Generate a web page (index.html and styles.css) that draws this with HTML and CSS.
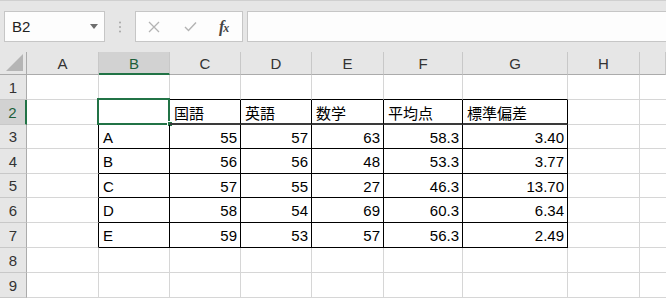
FILE: index.html
```html
<!DOCTYPE html>
<html lang="ja">
<head>
<meta charset="utf-8">
<link rel="stylesheet" href="styles.css">
</head>
<body>
<div class="app">
  <div class="toolbar">
    <div class="namebox">
      <span class="nb-text">B2</span>
      <svg class="nb-arrow" width="8" height="5" viewBox="0 0 8 5"><path d="M0 0H8L4 5Z" fill="#6e6e6e"/></svg>
    </div>
    <div class="sep-dots">
      <svg width="4" height="12" viewBox="0 0 4 12"><circle cx="2" cy="1.5" r="1" fill="#a6a6a6"/><circle cx="2" cy="6" r="1" fill="#a6a6a6"/><circle cx="2" cy="10.5" r="1" fill="#a6a6a6"/></svg>
    </div>
    <div class="fbuttons">
      <svg class="ic-x" width="12" height="12" viewBox="0 0 12 12"><path d="M1 1L11 11M11 1L1 11" stroke="#b3b3b3" stroke-width="1.3" fill="none"/></svg>
      <svg class="ic-check" width="13" height="11" viewBox="0 0 13 11"><path d="M1 6L4.5 9.5L12 1.5" stroke="#b3b3b3" stroke-width="1.4" fill="none"/></svg>
      <span class="ic-fx">f<span class="fx-x">x</span></span>
    </div>
    <div class="formula"></div>
  </div>

  <div class="sheet">
    <div class="row hdr">
      <div class="corner"><svg width="17" height="17" viewBox="0 0 17 17"><path d="M17 0V17H0Z" fill="#b5b5b5"/></svg></div>
      <div class="ch">A</div>
      <div class="ch sel">B</div>
      <div class="ch">C</div>
      <div class="ch">D</div>
      <div class="ch">E</div>
      <div class="ch">F</div>
      <div class="ch">G</div>
      <div class="ch">H</div>
      <div class="ch last"></div>
    </div>

    <div class="row r25">
      <div class="rh">1</div>
      <div class="c"></div>
      <div class="c tt"></div><div class="c tt"></div><div class="c tt"></div><div class="c tt"></div><div class="c tt"></div><div class="c tt"></div>
      <div class="c"></div><div class="c last"></div>
    </div>

    <div class="row r25">
      <div class="rh rsel">2</div>
      <div class="c tl"></div>
      <div class="c t th active"><span class="selbox"></span><span class="handle"></span></div>
      <div class="c t th">国語</div>
      <div class="c t th">英語</div>
      <div class="c t th">数学</div>
      <div class="c t th">平均点</div>
      <div class="c t th">標準偏差</div>
      <div class="c"></div><div class="c last"></div>
    </div>

    <div class="row r24">
      <div class="rh">3</div>
      <div class="c tl"></div>
      <div class="c t">A</div>
      <div class="c t n">55</div><div class="c t n">57</div><div class="c t n">63</div><div class="c t n">58.3</div><div class="c t n">3.40</div>
      <div class="c"></div><div class="c last"></div>
    </div>

    <div class="row r25">
      <div class="rh">4</div>
      <div class="c tl"></div>
      <div class="c t">B</div>
      <div class="c t n">56</div><div class="c t n">56</div><div class="c t n">48</div><div class="c t n">53.3</div><div class="c t n">3.77</div>
      <div class="c"></div><div class="c last"></div>
    </div>

    <div class="row r24">
      <div class="rh">5</div>
      <div class="c tl"></div>
      <div class="c t">C</div>
      <div class="c t n">57</div><div class="c t n">55</div><div class="c t n">27</div><div class="c t n">46.3</div><div class="c t n">13.70</div>
      <div class="c"></div><div class="c last"></div>
    </div>

    <div class="row r25">
      <div class="rh">6</div>
      <div class="c tl"></div>
      <div class="c t">D</div>
      <div class="c t n">58</div><div class="c t n">54</div><div class="c t n">69</div><div class="c t n">60.3</div><div class="c t n">6.34</div>
      <div class="c"></div><div class="c last"></div>
    </div>

    <div class="row r25">
      <div class="rh">7</div>
      <div class="c tl"></div>
      <div class="c t">E</div>
      <div class="c t n">59</div><div class="c t n">53</div><div class="c t n">57</div><div class="c t n">56.3</div><div class="c t n">2.49</div>
      <div class="c"></div><div class="c last"></div>
    </div>

    <div class="row r25">
      <div class="rh">8</div>
      <div class="c"></div><div class="c"></div><div class="c"></div><div class="c"></div><div class="c"></div><div class="c"></div><div class="c"></div><div class="c"></div><div class="c last"></div>
    </div>

    <div class="row r25">
      <div class="rh">9</div>
      <div class="c"></div><div class="c"></div><div class="c"></div><div class="c"></div><div class="c"></div><div class="c"></div><div class="c"></div><div class="c"></div><div class="c last"></div>
    </div>
  </div>
</div>
</body>
</html>
```

FILE: styles.css
```css
* { box-sizing: border-box; }
html, body { margin: 0; padding: 0; }
body {
  width: 666px;
  height: 300px;
  overflow: hidden;
  background: #ffffff;
  font-family: "Liberation Sans", "Noto Sans CJK JP", sans-serif;
  color: #000;
}
.app { width: 666px; }

.toolbar {
  height: 52px;
  background: #e6e6e6;
  border-top: 1px solid #d0d0d0;
  display: flex;
  align-items: flex-start;
  padding: 10px 0 0 4px;
}
.namebox {
  width: 101px;
  height: 31px;
  background: #fdfdfd;
  border: 1px solid #c6c6c6;
  display: flex;
  align-items: center;
  justify-content: space-between;
  padding: 0 6px 0 7px;
}
.nb-text { font-size: 15px; color: #222; }
.sep-dots {
  width: 30px;
  height: 31px;
  display: flex;
  align-items: center;
  justify-content: center;
}
.fbuttons {
  width: 108px;
  height: 31px;
  background: #fdfdfd;
  border: 1px solid #c6c6c6;
  display: flex;
  align-items: center;
  padding: 0 0 0 12px;
}
.ic-x { margin-right: 24px; }
.ic-check { margin-right: 22px; }
.ic-fx {
  font-family: "Liberation Serif", serif;
  font-style: italic;
  font-weight: bold;
  font-size: 16px;
  color: #444;
  letter-spacing: -1px;
}
.fx-x { font-size: 12px; }
.formula {
  flex: 1;
  height: 31px;
  margin-left: 4px;
  background: #fdfdfd;
  border: 1px solid #c6c6c6;
  border-right: none;
}

.sheet { width: 666px; }
.row {
  display: grid;
  grid-template-columns: 27px 72px 71px 71px 71px 72px 79px 105px 72px 26px;
}
.hdr { height: 23px; }
.r25 { height: 25px; }
.r24 { height: 24px; }

.corner {
  background: #e6e6e6;
  border-right: 1px solid #ababab;
  border-bottom: 1px solid #ababab;
  display: flex;
  align-items: flex-end;
  justify-content: flex-end;
  padding: 0 3px 3px 0;
}
.ch {
  background: #e6e6e6;
  border-right: 1px solid #c8c8c8;
  border-bottom: 1px solid #ababab;
  display: flex;
  align-items: center;
  justify-content: center;
  font-size: 15px;
  color: #333;
}
.ch.sel {
  background: #d2d2d2;
  border-bottom: 2px solid #217346;
  color: #1c5f3a;
  padding-top: 1px;
}
.rh {
  background: #e6e6e6;
  border-right: 1px solid #ababab;
  border-bottom: 1px solid #c8c8c8;
  display: flex;
  align-items: center;
  justify-content: center;
  font-size: 15px;
  color: #333;
}
.rh.rsel {
  background: #d2d2d2;
  border-right: 2px solid #217346;
  color: #1c5f3a;
}

.c {
  border-right: 1px solid #d6d6d6;
  border-bottom: 1px solid #d6d6d6;
  display: flex;
  align-items: center;
  padding: 1px 3px 0 4px;
  font-size: 15px;
  white-space: nowrap;
  position: relative;
}
.c.last { border-right: none; }
.c.tt { border-bottom-color: #000; }
.c.tl { border-right-color: #000; }
.c.t { border-right-color: #000; border-bottom-color: #000; }
.c.th { border-bottom: 2px solid #3a3a3a; }
.c.n { justify-content: flex-end; padding-right: 3px; }

.selbox {
  position: absolute;
  left: -2px;
  top: -2px;
  right: -1px;
  bottom: -2px;
  border: 2px solid #217346;
  pointer-events: none;
}
.handle {
  position: absolute;
  right: -4px;
  bottom: -4px;
  width: 6px;
  height: 6px;
  background: #217346;
  border: 1px solid #fff;
}
```
